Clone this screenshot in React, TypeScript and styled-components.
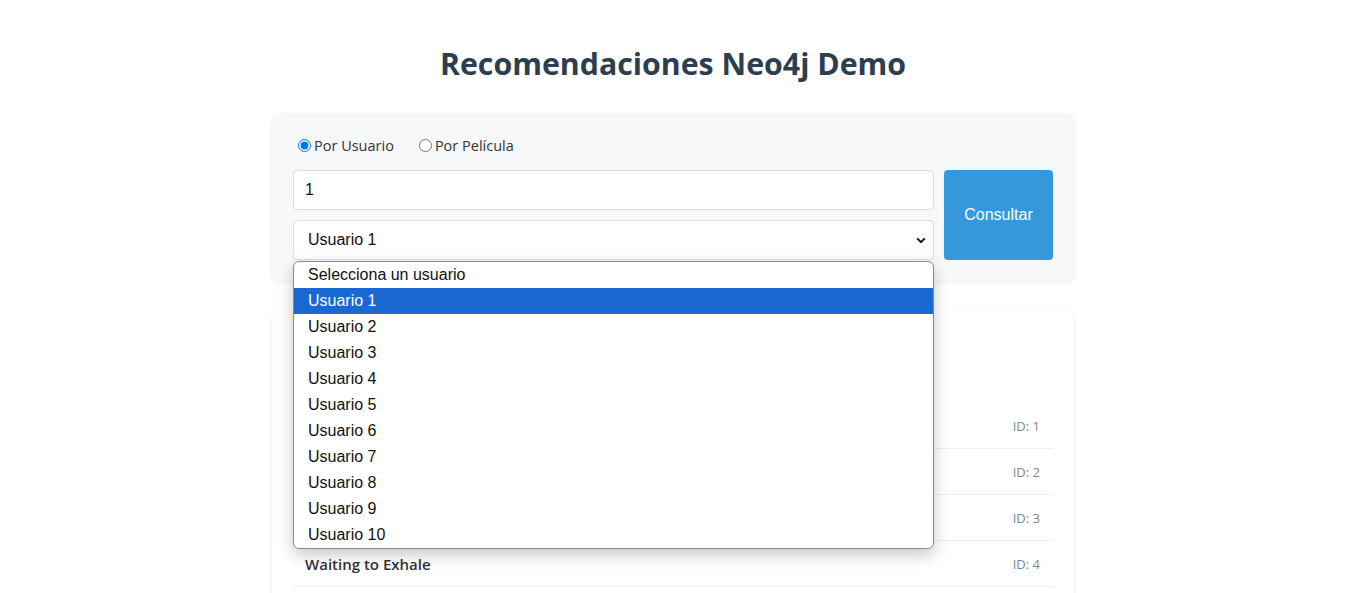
import styled, { createGlobalStyle } from "styled-components";

const GlobalStyle = createGlobalStyle`
  body {
    margin: 0;
    background: #ffffff;
    font-family: "Segoe UI", "Open Sans", "Noto Sans", sans-serif;
    color: #333;
  }
`;

const users = Array.from({ length: 10 }, (_, i) => ({ id: i + 1, name: `Usuario ${i + 1}` }));

const movies = [
  { id: 1, title: "Toy Story" },
  { id: 2, title: "Jumanji" },
  { id: 3, title: "Grumpier Old Men" },
  { id: 4, title: "Waiting to Exhale" },
  { id: 5, title: "Father of the Bride Part II" },
];

const App = () => {
  return (
    <>
      <GlobalStyle />
      <Page>
        <Title>Recomendaciones Neo4j Demo</Title>
        <QueryPanel>
          <RadioRow>
            <RadioLabel>
              <input type="radio" name="mode" defaultChecked />
              Por Usuario
            </RadioLabel>
            <RadioLabel>
              <input type="radio" name="mode" />
              Por Película
            </RadioLabel>
          </RadioRow>
          <FormRow>
            <Fields>
              <TextInput defaultValue="1" />
              <SelectWrapper>
                <FakeSelect>
                  Usuario 1
                  <svg width="10" height="7" viewBox="0 0 10 7">
                    <path d="M1.2 1.4 L5 5.2 L8.8 1.4" fill="none" stroke="#111" strokeWidth="2" />
                  </svg>
                </FakeSelect>
                <OptionList>
                  <Option>Selecciona un usuario</Option>
                  {users.map(user => (
                    <Option key={user.id} $selected={user.id === 1}>
                      {user.name}
                    </Option>
                  ))}
                </OptionList>
              </SelectWrapper>
            </Fields>
            <SubmitButton type="button">Consultar</SubmitButton>
          </FormRow>
        </QueryPanel>
        <ResultsPanel>
          <ResultsTitle>Recomendaciones para Usuario 1</ResultsTitle>
          <ResultsList>
            {movies.map(movie => (
              <MovieRow key={movie.id}>
                <MovieTitle>{movie.title}</MovieTitle>
                <MovieId>ID: {movie.id}</MovieId>
              </MovieRow>
            ))}
          </ResultsList>
        </ResultsPanel>
      </Page>
    </>
  );
};

const Page = styled.div`
  max-width: 802px;
  margin: 0 auto;
  padding: 20px 2px 20px 0;
`;

const Title = styled.h1`
  margin: 24px 0 30px;
  text-align: center;
  font-size: 30.3px;
  font-weight: 700;
  color: #2c3e50;
  line-height: 40px;
`;

const QueryPanel = styled.div`
  background: #f7f8fa;
  border-radius: 8px;
  padding: 21px;
  box-shadow: 0 1px 4px rgba(0, 0, 0, 0.08);
`;

const RadioRow = styled.div`
  display: flex;
  gap: 24px;
  padding-left: 4px;
  margin-bottom: 15px;
  height: 20px;
  align-items: center;
`;

const RadioLabel = styled.label`
  display: flex;
  align-items: center;
  font-size: 14.5px;
  color: #333;

  & > input {
    margin: 0 3px 0 1px;
    width: 13px;
    height: 13px;
  }
`;

const FormRow = styled.div`
  display: flex;
  gap: 10px;
`;

const Fields = styled.div`
  flex: 1;
  display: flex;
  flex-direction: column;
  gap: 10px;
`;

const TextInput = styled.input`
  box-sizing: border-box;
  height: 40px;
  padding: 0 11px;
  border: 1px solid #ddd;
  border-radius: 4px;
  font-family: "Liberation Sans", Arial, sans-serif;
  font-size: 16px;
  color: #111;
  background: #fff;
`;

const SelectWrapper = styled.div`
  position: relative;
`;

const FakeSelect = styled.div`
  box-sizing: border-box;
  height: 40px;
  padding: 0 7px 0 14px;
  border: 1px solid #ddd;
  border-radius: 4px;
  background: #fff;
  display: flex;
  align-items: center;
  justify-content: space-between;
  font-family: "Liberation Sans", Arial, sans-serif;
  font-size: 16px;
  color: #111;
`;

const OptionList = styled.div`
  position: absolute;
  top: 41px;
  left: 0;
  right: 0;
  z-index: 10;
  background: #fff;
  border: 1px solid #8a8a8a;
  border-radius: 6px;
  box-shadow: 0 6px 16px rgba(0, 0, 0, 0.22);
  overflow: hidden;
`;

const Option = styled.div<{ $selected?: boolean }>`
  height: 26px;
  line-height: 26px;
  padding-left: 14px;
  font-family: "Liberation Sans", Arial, sans-serif;
  font-size: 16px;
  color: ${p => (p.$selected ? "#fff" : "#111")};
  background: ${p => (p.$selected ? "#1a68d2" : "transparent")};
`;

const SubmitButton = styled.button`
  width: 109px;
  border: none;
  border-radius: 4px;
  background: #3498db;
  color: #fff;
  font-family: "Liberation Sans", Arial, sans-serif;
  font-size: 16px;
  cursor: pointer;
`;

const ResultsPanel = styled.div`
  margin-top: 30px;
  background: #fff;
  border-radius: 8px;
  padding: 21px;
  box-shadow: 0 1px 4px rgba(0, 0, 0, 0.08);
`;

const ResultsTitle = styled.h2`
  margin: 10px 0 31px;
  font-size: 22px;
  color: #2c3e50;
`;

const ResultsList = styled.div`
  display: flex;
  flex-direction: column;
`;

const MovieRow = styled.div`
  height: 46px;
  box-sizing: border-box;
  padding: 0 13px 0 12px;
  border-bottom: 1px solid #eee;
  display: flex;
  align-items: center;
  justify-content: space-between;
`;

const MovieTitle = styled.span`
  font-size: 15px;
  font-weight: 600;
  color: #333;
`;

const MovieId = styled.span`
  font-size: 13px;
  color: #7b8794;
`;

export default App;
